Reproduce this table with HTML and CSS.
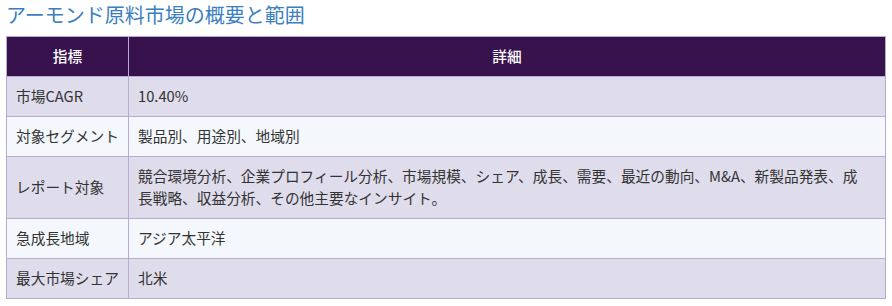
FILE: index.html
```html
<!DOCTYPE html>
<html lang="ja">
<head>
<meta charset="utf-8">
<link rel="stylesheet" href="styles.css">
</head>
<body>
<h2 class="title">アーモンド原料市場の概要と範囲</h2>
<table class="summary">
  <colgroup>
    <col class="col-key">
    <col class="col-val">
  </colgroup>
  <thead>
    <tr><th>指標</th><th>詳細</th></tr>
  </thead>
  <tbody>
    <tr class="odd"><td class="key">市場CAGR</td><td class="val">10.40%</td></tr>
    <tr class="even"><td class="key">対象セグメント</td><td class="val">製品別、用途別、地域別</td></tr>
    <tr class="odd"><td class="key">レポート対象</td><td class="val">競合環境分析、企業プロフィール分析、市場規模、シェア、成長、需要、最近の動向、M&amp;A、新製品発表、成長戦略、収益分析、その他主要なインサイト。</td></tr>
    <tr class="even"><td class="key">急成長地域</td><td class="val">アジア太平洋</td></tr>
    <tr class="odd"><td class="key">最大市場シェア</td><td class="val">北米</td></tr>
  </tbody>
</table>
</body>
</html>
```
FILE: styles.css
```css
html, body {
  margin: 0;
  padding: 0;
  background: #ffffff;
}
body {
  padding: 0 6px;
  font-family: "Noto Sans CJK JP", "Noto Sans", sans-serif;
  color: #333333;
}
.title {
  margin: 0 0 7px;
  font-size: 20px;
  line-height: 29px;
  font-weight: 400;
  color: #3b7fc2;
}
.summary {
  width: 880px;
  table-layout: fixed;
  border-collapse: collapse;
  font-size: 14.7px;
  line-height: 22px;
}
.col-key {
  width: 122px;
}
.summary th,
.summary td {
  border: 1px solid #b8aad3;
  padding: 8px 9px 9px;
  text-align: left;
  vertical-align: middle;
}
.summary td.key {
  padding-right: 2px;
  white-space: nowrap;
}
.summary td.val {
  padding-right: 22px;
}
.summary th {
  background: #38124d;
  color: #ffffff;
  font-weight: 500;
  text-align: center;
}
.summary .odd td {
  background: #dfdceb;
}
.summary .even td {
  background: #f4f8fc;
}
```
